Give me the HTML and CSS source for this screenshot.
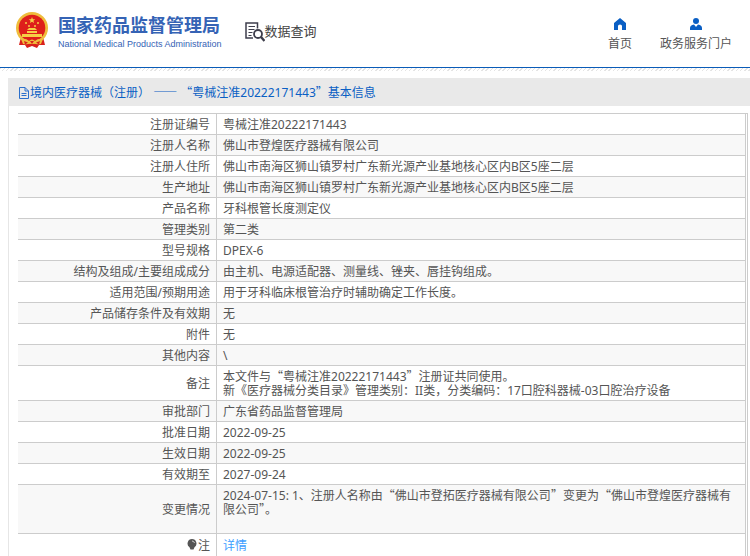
FILE: index.html
```html
<!DOCTYPE html>
<html lang="zh-CN">
<head>
<meta charset="utf-8">
<title>国家药品监督管理局 数据查询</title>
<link rel="stylesheet" href="styles.css">
</head>
<body>
<header class="top">
  <div class="brand">
    <svg class="emblem" viewBox="0 0 34 36" aria-hidden="true">
      <path d="M6 25 L4 33 L10 33 L12 36 L17 34 L22 36 L24 33 L30 33 L28 25Z" fill="#d9201c"/>
      <circle cx="17" cy="16" r="16" fill="#efbd3c"/>
      <circle cx="17" cy="16" r="13.300" fill="#de1f1b"/>
      <path d="M17 5l.9 2.200 2.400.1-1.900 1.500.7 2.300-2.100-1.300-2.100 1.300.7-2.300-1.900-1.500 2.400-.1z" fill="#f6cf45"/>
      <g fill="#f6cf45"><circle cx="11" cy="11" r="1"/><circle cx="14" cy="14" r="1"/><circle cx="20" cy="14" r="1"/><circle cx="23" cy="11" r="1"/>
      <path d="M12 18l2-2h6l2 2zM12 19h10v2H12zM7 22h20v3H7z"/></g>
      <path d="M6 27q5-1 8 2 3-3 6 0 3-3 8-2l-2 5q-5 1-7-1l-2 1-2-1q-2 2-7 1z" fill="#efbd3c"/>
      <path d="M9 29l4 1.500-3 2zM25 29l-4 1.500 3 2zM15 29h4l-2 3z" fill="#d9201c"/>
    </svg>
    <div class="names">
      <span class="name">国家药品监督管理局</span>
      <span class="name-en">National Medical Products Administration</span>
    </div>
  </div>
  <div class="section">
    <svg class="search-icon" viewBox="0 0 20 20" fill="none" stroke="#3e3e4c" aria-hidden="true">
      <path d="M12.500 6.500V1H1v15h7" stroke-width="1.500"/>
      <path d="M3.500 4.500h6.500M3.500 7.500h6M3.500 10.500h4M3.500 13.500h3" stroke-width="1.200"/>
      <circle cx="13" cy="12" r="4" stroke-width="1.800"/><path d="M16 15l3.500 4" stroke-width="2.400"/>
    </svg>
    <span>数据查询</span>
  </div>
  <nav class="nav">
    <a href="#home">
      <svg viewBox="0 0 12 12" aria-hidden="true"><path d="M6 0l6 5v7H8V8q0-1.500-2-1.500T4 8v4H0V5z" fill="#0a5fc4"/></svg>
      首页
    </a>
    <a href="#portal">
      <svg viewBox="0 0 12 12" aria-hidden="true"><circle cx="6" cy="3" r="3" fill="#0a5fc4"/><path d="M0 12V10q0-3 4-3.500L6 9l2-2.500q4 .5 4 3.500v2z" fill="#0a5fc4"/></svg>
      政务服务门户
    </a>
  </nav>
</header>
<div class="hatch"></div>
<main class="panel">
  <h1 class="title">
    <svg viewBox="0 0 12 12" fill="none" stroke="#2b6fcb" aria-hidden="true"><path d="M1.500 .5h5.500l3.500 3.500v7.500h-9zM7 .5V4h3.500M3.500 6.500h5M3.500 8.500h5"/></svg>
    <span>境内医疗器械（注册） <span class="cjk">——</span> <span class="cjk">“</span>粤械注准20222171443<span class="cjk">”</span>基本信息</span>
  </h1>
  <div class="frame">
    <table class="info">
      <tr><th scope="row">注册证编号</th><td>粤械注准20222171443</td></tr>
      <tr><th scope="row">注册人名称</th><td>佛山市登煌医疗器械有限公司</td></tr>
      <tr><th scope="row">注册人住所</th><td>佛山市南海区狮山镇罗村广东新光源产业基地核心区内B区5座二层</td></tr>
      <tr><th scope="row">生产地址</th><td>佛山市南海区狮山镇罗村广东新光源产业基地核心区内B区5座二层</td></tr>
      <tr><th scope="row">产品名称</th><td>牙科根管长度测定仪</td></tr>
      <tr><th scope="row">管理类别</th><td>第二类</td></tr>
      <tr><th scope="row">型号规格</th><td>DPEX-6</td></tr>
      <tr><th scope="row">结构及组成/主要组成成分</th><td>由主机、电源适配器、测量线、锉夹、唇挂钩组成。</td></tr>
      <tr><th scope="row">适用范围/预期用途</th><td>用于牙科临床根管治疗时辅助确定工作长度。</td></tr>
      <tr><th scope="row">产品储存条件及有效期</th><td>无</td></tr>
      <tr><th scope="row">附件</th><td>无</td></tr>
      <tr><th scope="row">其他内容</th><td>\</td></tr>
      <tr><th scope="row">备注</th><td>本文件与<span class="cjk">“</span>粤械注准20222171443<span class="cjk">”</span>注册证共同使用。<br>新《医疗器械分类目录》管理类别：II类，分类编码：17口腔科器械-03口腔治疗设备</td></tr>
      <tr><th scope="row">审批部门</th><td>广东省药品监督管理局</td></tr>
      <tr><th scope="row">批准日期</th><td>2022-09-25</td></tr>
      <tr><th scope="row">生效日期</th><td>2022-09-25</td></tr>
      <tr><th scope="row">有效期至</th><td>2027-09-24</td></tr>
      <tr><th scope="row">变更情况</th><td>2024-07-15: 1、注册人名称由<span class="cjk">“</span>佛山市登拓医疗器械有限公司<span class="cjk">”</span>变更为<span class="cjk">“</span>佛山市登煌医疗器械有限公司<span class="cjk">”</span>。<br><br></td></tr>
      <tr class="note"><th scope="row"><svg viewBox="0 0 10 12" aria-hidden="true"><path d="M5 0a4.500 4.500 0 0 1 2.500 8.200L6.500 10.500h-3L2.500 8.200A4.500 4.500 0 0 1 5 0z" fill="#555"/><path d="M5 2q2 0 2.500 2" fill="none" stroke="#ccc"/></svg>注</th><td><a href="#detail">详情</a></td></tr>
    </table>
  </div>
</main>
</body>
</html>
```
FILE: styles.css
```css
* { box-sizing: border-box; }
body {
  margin: 0;
  background: #fff;
  color: #555;
  font: 12px/14px "Noto Sans", "Noto Sans CJK SC", sans-serif;
}
a { text-decoration: none; color: inherit; }
svg { display: block; flex: none; }
/* full-width quotes and dashes; zero line height keeps the rows even */
.cjk { font-family: "Noto Sans CJK SC", sans-serif; line-height: 0; }

.top {
  display: flex;
  align-items: flex-start;
  height: 68px;
  padding: 0 18px 0 15px;
  border-bottom: 1px solid #0a5cb8;
}
.brand { display: flex; gap: 9px; padding-top: 12px; }
.emblem { width: 34px; height: 36px; }
.names { display: flex; flex-direction: column; color: #3563b5; white-space: nowrap; }
.name { font-size: 18px; line-height: 26px; font-weight: 700; }
.name-en { font: 9px/12px "Liberation Sans", sans-serif; }
.section {
  display: flex;
  margin-left: 23px;
  padding-top: 22px;
  color: #444;
  font-size: 13px;
  line-height: 18px;
}
.search-icon { width: 20px; height: 20px; }
.nav { display: flex; gap: 28px; margin-left: auto; padding-top: 18px; }
.nav a { display: flex; flex-direction: column; align-items: center; gap: 7px; }
.nav svg { width: 12px; height: 12px; }

.hatch {
  height: 3px;
  background: repeating-linear-gradient(135deg, #e4e4e4 0 1px, #fff 1px 3px);
}

.panel { margin: 7px 0 0 8px; border-left: 1px solid #e6e6e6; }
.title {
  display: flex;
  align-items: center;
  height: 28px;
  margin: 0 0 7px -1px;
  padding: 1px 0 0 10px;
  background: #e9e9e9;
  color: #0a5fc4;
  font-size: 12px;
  font-weight: 400;
}
.title svg { width: 12px; height: 12px; }
.frame {
  margin: 0 2px 0 9px;
  padding-right: 1px;
  border-top: 1px solid #ccc;
  border-right: 1px solid #ccc;
}
.info { width: 100%; border-collapse: separate; border-spacing: 0; border-right: 1px solid #ccc; }
.info tr:nth-child(even) { background: #f8f8f8; }
.info th, .info td { padding: 4px 6px 2px; border-bottom: 1px solid #ccc; font-weight: 400; }
.info th { width: 199px; text-align: right; border-right: 1px solid #ccc; }
.info td { text-align: left; }
.info .note th, .info .note td { padding: 5px 6px 3px; border-bottom: 0; }
.note svg { display: inline-block; width: 10px; height: 12px; vertical-align: -1px; margin-right: 1px; }
.note a { color: #409eff; }
```
